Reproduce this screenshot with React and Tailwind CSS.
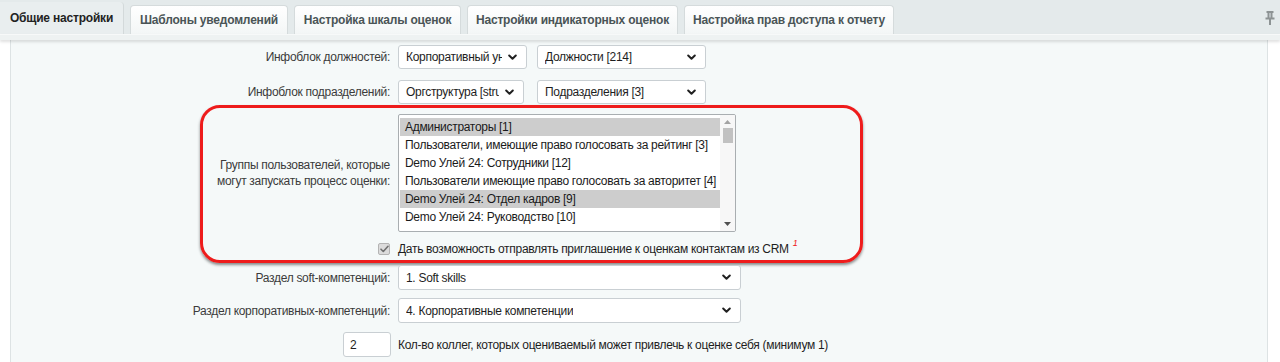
const TABS = [
  { label: "Общие настройки", active: true },
  { label: "Шаблоны уведомлений", width: "w-[158px]" },
  { label: "Настройка шкалы оценок", width: "w-[167px]" },
  { label: "Настройки индикаторных оценок", width: "w-[211px]" },
  { label: "Настройка прав доступа к отчету", width: "w-[210px]" },
];

const GROUPS = [
  { name: "Администраторы [1]", selected: true },
  { name: "Пользователи, имеющие право голосовать за рейтинг [3]" },
  { name: "Demo Улей 24: Сотрудники [12]" },
  { name: "Пользователи имеющие право голосовать за авторитет [4]" },
  { name: "Demo Улей 24: Отдел кадров [9]", selected: true },
  { name: "Demo Улей 24: Руководство [10]" },
];

const TXT = "text-[12px] tracking-[-0.3px]";

function Chevron() {
  return (
    <svg width="9" height="7" viewBox="0 0 9 7" fill="none">
      <path d="M1.2 1.5l3.3 3.3 3.3-3.3" stroke="#222" strokeWidth="2" strokeLinecap="round" strokeLinejoin="round" />
    </svg>
  );
}

function Select({ value, width, height = "h-[24px]" }) {
  return (
    <div
      className={[
        "flex items-center justify-between bg-white border border-[#c9cfd3] rounded-[3px] pl-[7px] pr-[9px] overflow-hidden",
        width,
        height,
      ].join(" ")}
    >
      <span className={"whitespace-nowrap overflow-hidden text-[#1e1e1e] " + TXT}>{value}</span>
      <span className="flex-shrink-0 pl-[6px]">
        <Chevron />
      </span>
    </div>
  );
}

function Label({ children, width = "w-[387px]" }) {
  return (
    <div className={["flex-shrink-0 text-right pr-[8px] text-[#3b3b3b] leading-[16px] whitespace-nowrap", TXT, width].join(" ")}>
      {children}
    </div>
  );
}

export default function App() {
  return (
    <div className="w-[1280px] h-[362px] overflow-hidden bg-white font-['Liberation_Sans',Arial,sans-serif]">
      {/* Tabs */}
      <div className="h-[34px] bg-[#e4eaeb] flex items-end relative">
        {TABS.map((tab) =>
          tab.active ? (
            <div
              key={tab.label}
              className="h-[32px] w-[124px] flex items-center justify-center bg-[#e9eeef] border-r border-[#d3d9da] rounded-tr-[4px] text-[12px] tracking-[-0.2px] font-bold text-[#222]"
            >
              {tab.label}
            </div>
          ) : (
            <div
              key={tab.label}
              className={[
                "h-[29px] ml-[6px] flex items-center justify-center bg-gradient-to-b from-[#ffffff] to-[#f3f6f6] border border-b-0 border-[#d5dbdc] rounded-t-[4px] text-[12px] tracking-[-0.2px] font-bold text-[#4a5456] whitespace-nowrap",
                tab.width,
              ].join(" ")}
            >
              {tab.label}
            </div>
          ),
        )}
        <svg className="absolute right-[5px] top-[11px]" width="10" height="14" viewBox="0 0 10 14" fill="none">
          <path d="M2.5 1h5M3.5 1v5.5M6.5 1v5.5M1.5 7.5h7M5 7.5V13" stroke="#8d9394" strokeWidth="2" strokeLinecap="square" />
        </svg>
      </div>
      <div className="h-[6px] bg-[#eef2f2] border-t border-[#f7f9f9] shadow-[0_2px_3px_rgba(0,0,0,0.12)] relative" />

      {/* Content */}
      <div className="flex h-[322px]">
        <div className="w-[10px] bg-white flex-shrink-0" />
        <div className="w-[1258px] border-l border-r border-[#dde3e4] bg-[#f5f9f9] flex flex-col">
          <div className="flex items-center mt-[5px]">
            <Label>Инфоблок должностей:</Label>
            <Select value="Корпоративный университет" width="w-[129px]" />
            <div className="w-[10px]" />
            <Select value="Должности [214]" width="w-[169px]" />
          </div>
          <div className="flex items-center mt-[11px]">
            <Label>Инфоблок подразделений:</Label>
            <Select value="Оргструктура [structure]" width="w-[126px]" />
            <div className="w-[13px]" />
            <Select value="Подразделения [3]" width="w-[169px]" />
          </div>

          {/* Highlighted block */}
          <div className="ml-[189px] w-[663px] h-[158px] mt-[1px] border-[3px] border-[#ee1c1c] rounded-[20px] shadow-[0_2px_3px_rgba(0,0,0,0.45)] flex flex-col">
            <div className="flex items-center mt-[6px]">
              <Label width="w-[195px]">
                Группы пользователей, которые
                <br />
                могут запускать процесс оценки:
              </Label>
              <div className="w-[338px] h-[118px] bg-white border border-[#a9aeb1] rounded-[2px] flex overflow-hidden">
                <div className="flex-1 pt-[3px] pl-[1px] overflow-hidden">
                  {GROUPS.map((g) => (
                    <div
                      key={g.name}
                      className={[
                        "h-[18px] leading-[18px] pl-[5px] text-[#1a1a1a] whitespace-nowrap",
                        TXT,
                        g.selected ? "bg-[#cdcdcd]" : "",
                      ].join(" ")}
                    >
                      {g.name}
                    </div>
                  ))}
                </div>
                <div className="w-[15px] bg-[#f7f7f7] flex flex-col items-center pt-[5px] pb-[5px]">
                  <svg width="7" height="4" viewBox="0 0 7 4">
                    <path d="M0 4L3.5 0L7 4Z" fill="#a3a3a3" />
                  </svg>
                  <div className="w-[10px] h-[15px] bg-[#c1c1c1] mt-[4px]" />
                  <div className="flex-1" />
                  <svg width="7" height="4" viewBox="0 0 7 4">
                    <path d="M0 0L3.5 4L7 0Z" fill="#505050" />
                  </svg>
                </div>
              </div>
            </div>
            <div className="flex items-center mt-[8px] h-[18px]">
              <div className="w-[187px] flex-shrink-0 flex justify-end">
                <div className="w-[12px] h-[12px] bg-[#dcdcdc] border border-[#b4b4b4] rounded-[2px] flex items-center justify-center">
                  <svg width="9" height="8" viewBox="0 0 9 8" fill="none">
                    <path d="M1 4.2l2.3 2.3L8 1.3" stroke="#707070" strokeWidth="1.6" strokeLinecap="round" strokeLinejoin="round" />
                  </svg>
                </div>
              </div>
              <div className="w-[8px]" />
              <span className={"text-[#1e1e1e] whitespace-nowrap " + TXT}>
                Дать возможность отправлять приглашение к оценкам контактам из CRM
              </span>
              <span className="ml-[4px] -mt-[10px] text-[9px] italic text-[#f02020]">1</span>
            </div>
          </div>

          <div className="flex items-center mt-[2px]">
            <Label>Раздел soft-компетенций:</Label>
            <Select value="1. Soft skills" width="w-[343px]" height="h-[25px]" />
          </div>
          <div className="flex items-center mt-[8px]">
            <Label>Раздел корпоративных-компетенций:</Label>
            <Select value="4. Корпоративные компетенции" width="w-[343px]" height="h-[25px]" />
          </div>
          <div className="flex items-center mt-[9px]">
            <div className="w-[332px] flex-shrink-0" />
            <div className={"w-[48px] h-[25px] bg-white border border-[#c9cfd3] rounded-[3px] pl-[6px] flex items-center text-[#1e1e1e] " + TXT}>
              2
            </div>
            <div className="w-[7px]" />
            <span className={"text-[#1e1e1e] " + TXT}>
              Кол-во коллег, которых оцениваемый может привлечь к оценке себя (минимум 1)
            </span>
          </div>
        </div>
      </div>
    </div>
  );
}
